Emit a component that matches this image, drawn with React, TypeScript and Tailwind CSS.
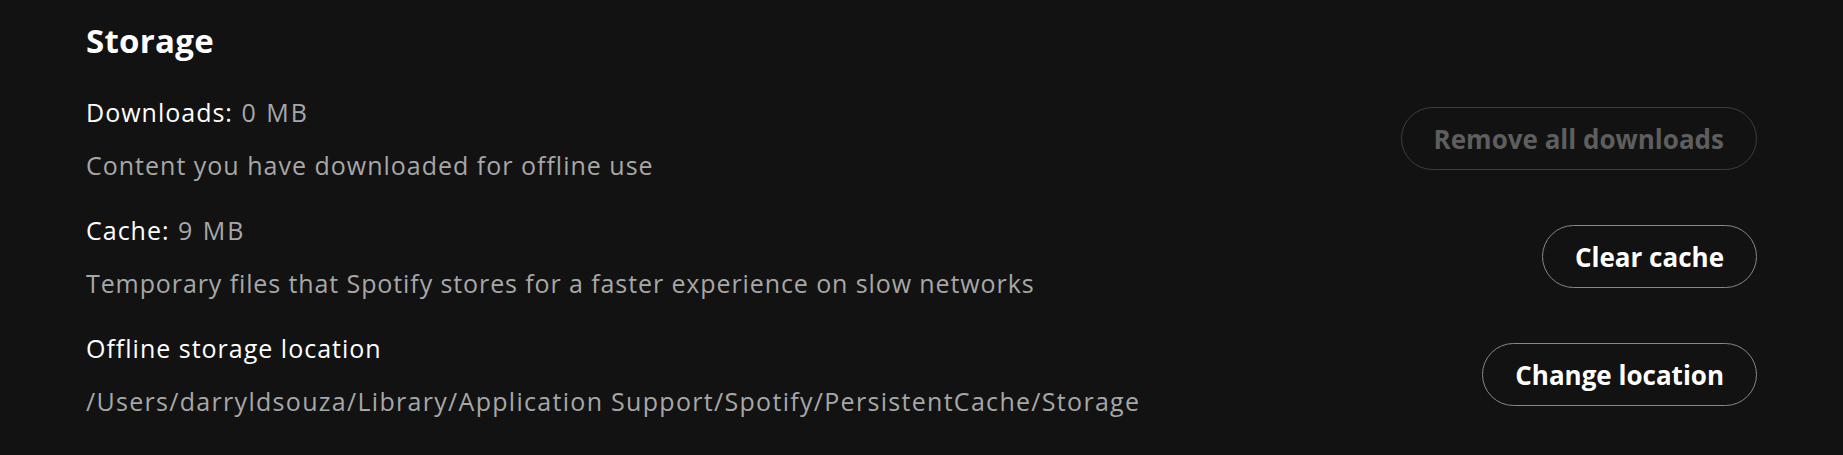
const rows = [
  {
    label: "Downloads:",
    value: "0 MB",
    description: "Content you have downloaded for offline use",
    tracking: "tracking-[1px]",
    action: "Remove all downloads",
    disabled: true,
  },
  {
    label: "Cache:",
    value: "9 MB",
    description: "Temporary files that Spotify stores for a faster experience on slow networks",
    tracking: "tracking-[0.9px]",
    action: "Clear cache",
    disabled: false,
  },
  {
    label: "Offline storage location",
    value: "",
    description: "/Users/darryldsouza/Library/Application Support/Spotify/PersistentCache/Storage",
    tracking: "tracking-[1.3px]",
    action: "Change location",
    disabled: false,
  },
];

function ActionButton({ children, disabled }: { children: string; disabled?: boolean }) {
  return (
    <button
      disabled={disabled}
      className={
        disabled
          ? "h-[63px] rounded-full border border-[#3e3e3e] px-[32px] text-[26px] font-bold text-[#5e5e5e] leading-none"
          : "h-[63px] rounded-full border border-[#878787] px-[32px] text-[26px] font-bold text-white leading-none"
      }
    >
      {children}
    </button>
  );
}

export default function App() {
  return (
    <div
      className="w-[1843px] h-[455px] bg-[#121212] px-[86px] pt-[21px] text-white"
      style={{ fontFamily: "'Open Sans', 'Liberation Sans', sans-serif" }}
    >
      <h2 className="text-[33px] font-bold leading-[40px] tracking-[0.3px]">Storage</h2>
      <div className="mt-[35px] flex flex-col gap-[33px]">
        {rows.map((row) => (
          <div key={row.action} className="flex items-center justify-between">
            <div className="flex flex-col gap-[21px] text-[25px] leading-[32px] tracking-[1px]">
              <div>
                {row.label}
                {row.value && <span className="tracking-[2px] text-[#a7a7a7]"> {row.value}</span>}
              </div>
              <div className={`text-[#a7a7a7] ${row.tracking}`}>{row.description}</div>
            </div>
            <ActionButton disabled={row.disabled}>{row.action}</ActionButton>
          </div>
        ))}
      </div>
    </div>
  );
}
